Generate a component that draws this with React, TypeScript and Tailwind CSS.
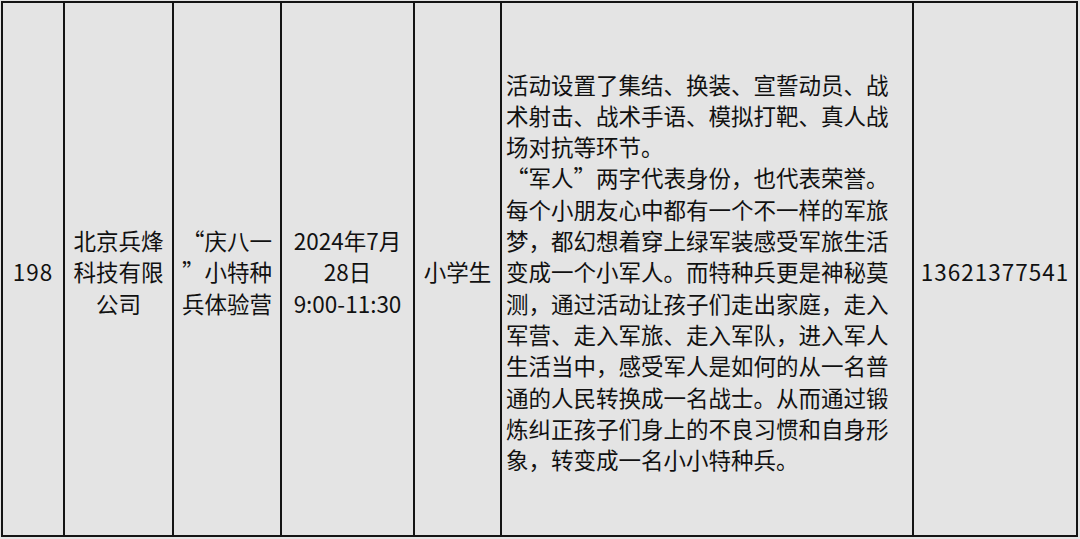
import * as React from 'react';

const descLines = [
  '活动设置了集结、换装、宣誓动员、战',
  '术射击、战术手语、模拟打靶、真人战',
  '场对抗等环节。',
  '“军人”两字代表身份，也代表荣誉。',
  '每个小朋友心中都有一个不一样的军旅',
  '梦，都幻想着穿上绿军装感受军旅生活',
  '变成一个小军人。而特种兵更是神秘莫',
  '测，通过活动让孩子们走出家庭，走入',
  '军营、走入军旅、走入军队，进入军人',
  '生活当中，感受军人是如何的从一名普',
  '通的人民转换成一名战士。从而通过锻',
  '炼纠正孩子们身上的不良习惯和自身形',
  '象，转变成一名小小特种兵。',
];

function Cell({ lines, className }: { lines: string[]; className?: string }) {
  return (
    <div
      className={
        'flex flex-col justify-center pt-[6px] border-r-2 border-[#141414] ' +
        (className ?? '')
      }
    >
      {lines.map((l, i) => (
        <div key={i} className="whitespace-pre">
          {l}
        </div>
      ))}
    </div>
  );
}

export default function App() {
  return (
    <div
      lang="zh-CN"
      className="w-[1080px] h-[539px] bg-[#e4e4e4] p-[1px] text-[#111] text-[22.5px] leading-[31.3px] font-['Noto_Sans_CJK_SC',sans-serif]"
    >
      <div className="grid h-[536px] w-[1077px] grid-cols-[62px_109px_108px_133px_87px_412px_162px] border-2 border-[#141414]">
        <Cell lines={['198']} className="items-center text-center tracking-[1px]" />
        <Cell lines={['北京兵烽', '科技有限', '公司']} className="items-center text-center" />
        <Cell lines={['“庆八一', '”小特种', '兵体验营']} className="items-center text-center" />
        <Cell lines={['2024年7月', '28日', '9:00-11:30']} className="items-center text-center" />
        <Cell lines={['小学生']} className="items-center text-center" />
        <Cell lines={descLines} className="pl-[4px]" />
        <div className="flex items-center justify-center pt-[6px] tracking-[1px]">13621377541</div>
      </div>
    </div>
  );
}
